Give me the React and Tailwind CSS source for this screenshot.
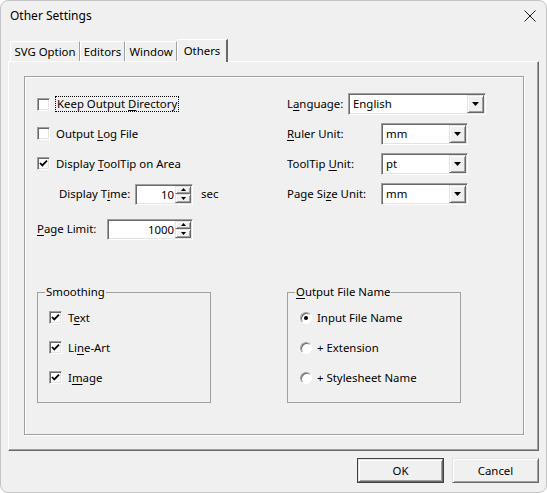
import React, { useState } from 'react';

const sunken =
  'bg-white border border-t-[#a0a0a0] border-l-[#a0a0a0] border-b-white border-r-white shadow-[inset_1px_1px_0_#696969,inset_-1px_-1px_0_#e3e3e3]';
const raised =
  'bg-[#f0f0f0] border border-t-[#e3e3e3] border-l-[#e3e3e3] border-b-[#696969] border-r-[#696969] shadow-[inset_1px_1px_0_#ffffff,inset_-1px_-1px_0_#a0a0a0]';

const Check = ({ checked, label, focus }) => (
  <div className="flex items-center">
    <div className={`w-[13px] h-[13px] flex items-center justify-center ${sunken}`}>
      {checked && (
        <svg width="9" height="9" viewBox="0 0 9 9">
          <path d="M1 4 L3.3 6.4 L8 1.6" fill="none" stroke="#000" strokeWidth="1.8" />
        </svg>
      )}
    </div>
    <span className={focus ? 'ml-[5px] px-[1px] border border-dotted border-black leading-[14px]' : 'ml-[6px]'}>
      {label}
    </span>
  </div>
);

const Radio = ({ checked, label }) => (
  <div className="flex items-center">
    <div className="w-[12px] h-[12px] rounded-full bg-white border border-t-[#a0a0a0] border-l-[#a0a0a0] border-b-white border-r-white shadow-[inset_1px_1px_0_#696969] flex items-center justify-center">
      {checked && <div className="w-[4px] h-[4px] rounded-full bg-black" />}
    </div>
    <span className="ml-[5px]">{label}</span>
  </div>
);

const Arrow = ({ up }) => (
  <svg width="5" height="3" viewBox="0 0 5 3">
    <path d={up ? 'M2.5 0 L5 3 L0 3 Z' : 'M0 0 L5 0 L2.5 3 Z'} fill="#000" />
  </svg>
);

const Spin = ({ value, width }) => (
  <div className={`flex h-[21px] p-[1px] ${width} ${sunken}`}>
    <div className="flex-1 text-right pr-[1px] leading-[17px]">{value}</div>
    <div className="w-[16px] flex flex-col">
      <div className={`flex-1 flex items-center justify-center ${raised}`}>
        <Arrow up />
      </div>
      <div className={`flex-1 flex items-center justify-center ${raised}`}>
        <Arrow />
      </div>
    </div>
  </div>
);

const Combo = ({ value, width }) => (
  <div className={`flex h-[22px] p-[1px] ${width} ${sunken}`}>
    <div className="flex-1 pl-[3px] leading-[18px]">{value}</div>
    <div className={`w-[17px] flex items-center justify-center ${raised}`}>
      <svg width="7" height="4" viewBox="0 0 7 4">
        <path d="M0 0 L7 0 L3.5 4 Z" fill="#000" />
      </svg>
    </div>
  </div>
);

const U = ({ children }) => <span className="underline underline-offset-[2px]">{children}</span>;

export default function App() {
  const [tab] = useState('Others');
  const tabs = [
    { name: 'SVG Option', w: 'w-[70px]' },
    { name: 'Editors', w: 'w-[45px]' },
    { name: 'Window', w: 'w-[52px]' },
    { name: 'Others', w: 'w-[51px]' },
  ];

  return (
    <div
      className="w-[547px] h-[493px] bg-white text-[11.4px] text-black"
      style={{ fontFamily: '"Segoe UI", "Noto Sans", "Open Sans", sans-serif' }}
    >
      <div className="w-full h-full flex flex-col bg-[#f0f0f0] border border-[#c4c4c4] rounded-[8px] overflow-hidden">
        {/* title bar */}
        <div className="h-[30px] flex items-center justify-between pl-[9px] pr-[10px] text-[12px]">
          <span>Other Settings</span>
          <svg width="12" height="12" viewBox="0 0 12 12">
            <path d="M0.5 0.5 L11.5 11.5 M11.5 0.5 L0.5 11.5" stroke="#1a1a1a" strokeWidth="1" />
          </svg>
        </div>

        <div className="px-[7px]">
          {/* tab strip */}
          <div className="mt-[8px] h-[22px] flex items-end pl-[2px]">
            {tabs.map((t) => {
              const active = t.name === tab;
              return (
                <div
                  key={t.name}
                  className={
                    active
                      ? `${t.w} h-[23px] -mb-[1px] relative z-10 bg-[#f0f0f0] border-l border-t border-l-white border-t-white border-r-2 border-r-[#696969] flex items-start justify-center pt-[2px]`
                      : `${t.w} h-[20px] bg-[#f0f0f0] border-l border-t border-l-white border-t-white border-r border-r-[#a0a0a0] flex items-start justify-center pt-[1px]`
                  }
                >
                  {t.name}
                </div>
              );
            })}
          </div>

          {/* tab panel */}
          <div className="h-[390px] border border-t-white border-l-white border-r-[#696969] border-b-[#696969] shadow-[inset_-1px_-1px_0_#a0a0a0] pt-[14px] pl-[15px]">
            <div className="w-[500px] h-[359px] border border-[#a0a0a0] shadow-[inset_1px_1px_0_#ffffff,1px_1px_0_#ffffff] pt-[12px] pl-[12px]">
              <div className="flex">
                {/* left column */}
                <div className="w-[250px] flex flex-col">
                  <div className="h-[30px] flex items-center">
                    <Check label={<>Keep Output <U>D</U>irectory</>} focus />
                  </div>
                  <div className="h-[30px] flex items-center">
                    <Check label={<>Output <U>L</U>og File</>} />
                  </div>
                  <div className="h-[30px] flex items-center">
                    <Check checked label={<>Display <U>T</U>oolTip on Area</>} />
                  </div>
                  <div className="h-[30px] flex items-center pl-[22px]">
                    <span className="w-[76px]">Display T<U>i</U>me:</span>
                    <Spin value="10" width="w-[58px]" />
                    <span className="ml-[8px]">sec</span>
                  </div>
                  <div className="h-[30px] mt-[5px] flex items-center">
                    <span className="w-[70px]"><U>P</U>age Limit:</span>
                    <Spin value="1000" width="w-[86px]" />
                  </div>
                </div>

                {/* right column */}
                <div className="flex flex-col">
                  <div className="h-[30px] flex items-center">
                    <span className="w-[61px]">L<U>a</U>nguage:</span>
                    <Combo value="English" width="w-[138px]" />
                  </div>
                  <div className="h-[30px] flex items-center">
                    <span className="w-[94px]"><U>R</U>uler Unit:</span>
                    <Combo value="mm" width="w-[87px]" />
                  </div>
                  <div className="h-[30px] flex items-center">
                    <span className="w-[94px]">ToolTip <U>U</U>nit:</span>
                    <Combo value="pt" width="w-[87px]" />
                  </div>
                  <div className="h-[30px] flex items-center">
                    <span className="w-[94px]">Page Si<U>z</U>e Unit:</span>
                    <Combo value="mm" width="w-[87px]" />
                  </div>
                </div>
              </div>

              {/* group boxes */}
              <div className="flex mt-[40px]">
                <div className="w-[250px]">
                  <fieldset className="w-[174px] h-[119px] border border-[#a0a0a0]">
                    <legend className="ml-[7px] px-[1px] leading-[16px]">Smoothing</legend>
                    <div className="pt-[3px] pl-[11px]">
                      <div className="h-[30px] flex items-center">
                        <Check checked label={<>T<U>e</U>xt</>} />
                      </div>
                      <div className="h-[30px] flex items-center">
                        <Check checked label={<>Li<U>n</U>e-Art</>} />
                      </div>
                      <div className="h-[30px] flex items-center">
                        <Check checked label={<>I<U>m</U>age</>} />
                      </div>
                    </div>
                  </fieldset>
                </div>
                <fieldset className="w-[174px] h-[119px] border border-[#a0a0a0]">
                  <legend className="ml-[7px] px-[1px] leading-[16px]"><U>O</U>utput File Name</legend>
                  <div className="pt-[3px] pl-[12px]">
                    <div className="h-[30px] flex items-center">
                      <Radio checked label="Input File Name" />
                    </div>
                    <div className="h-[30px] flex items-center">
                      <Radio label="+ Extension" />
                    </div>
                    <div className="h-[30px] flex items-center">
                      <Radio label="+ Stylesheet Name" />
                    </div>
                  </div>
                </fieldset>
              </div>
            </div>
          </div>

          {/* buttons */}
          <div className="mt-[7px] flex justify-end gap-[8px]">
            <button className="w-[87px] h-[25px] border border-[#404040] flex">
              <div className={`flex-1 flex items-center justify-center ${raised}`}>OK</div>
            </button>
            <button className={`w-[87px] h-[25px] flex items-center justify-center ${raised}`}>Cancel</button>
          </div>
        </div>
      </div>
    </div>
  );
}
